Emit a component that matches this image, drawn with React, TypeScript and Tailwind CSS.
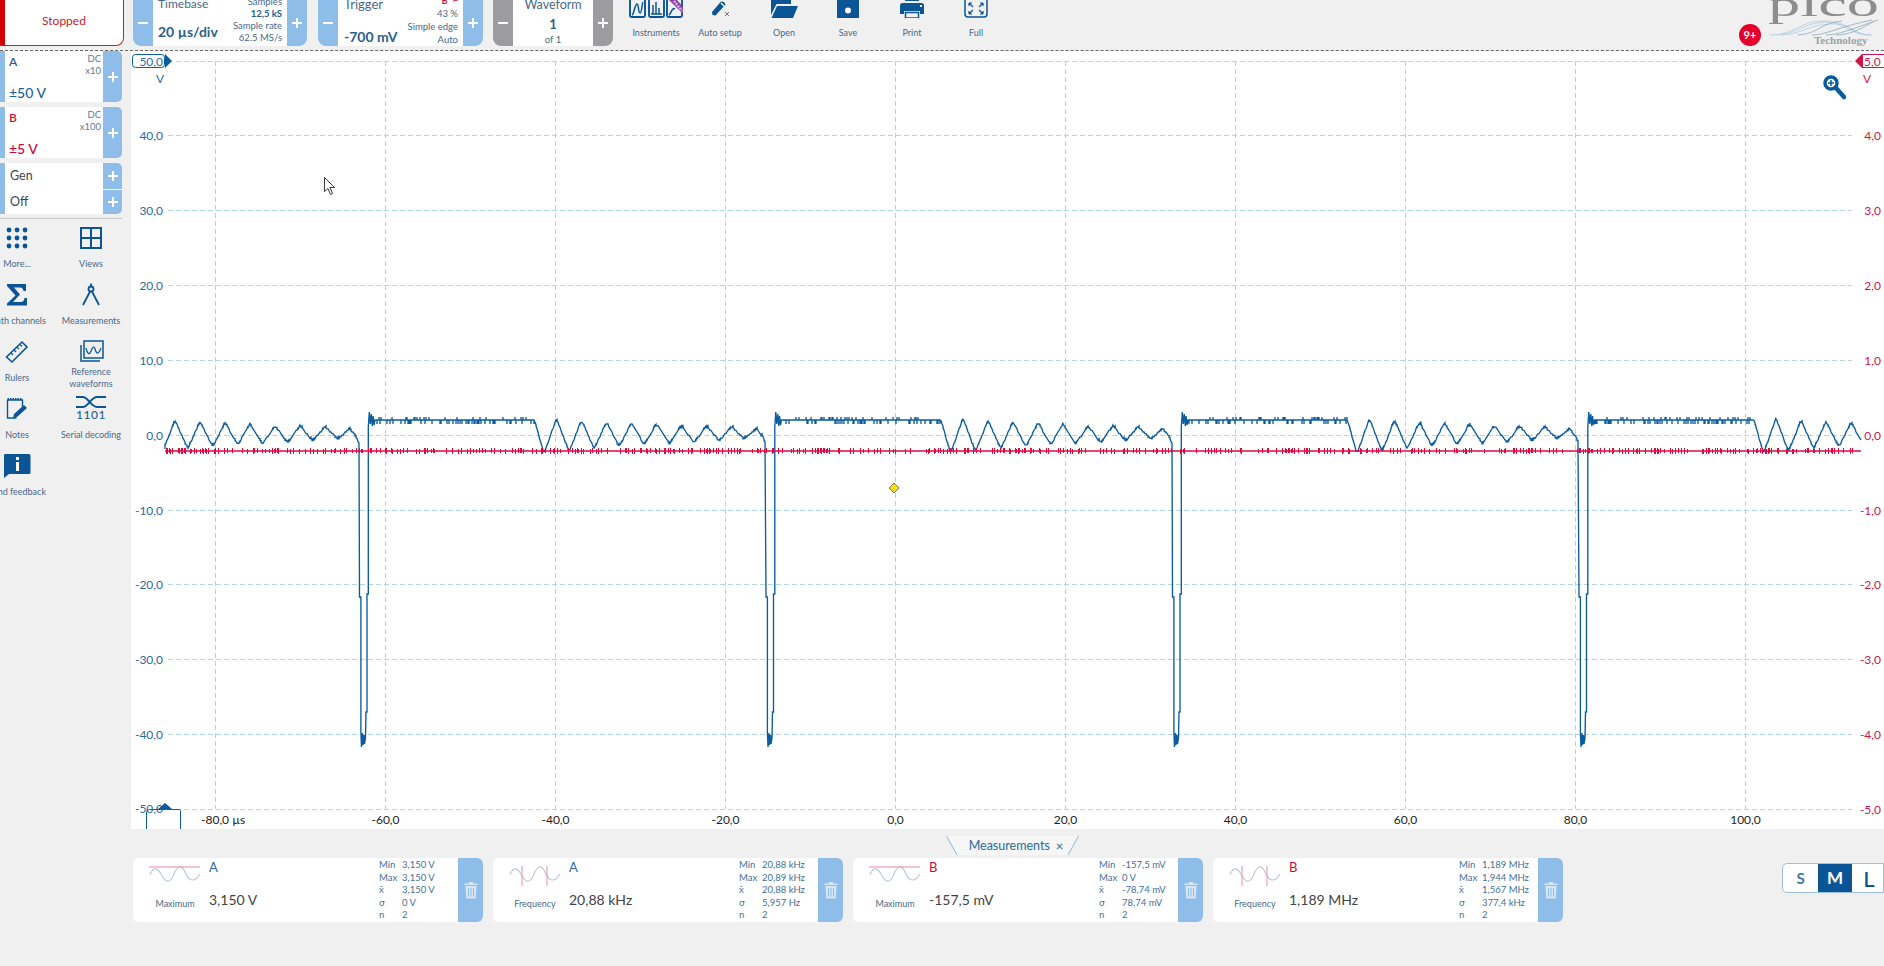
import React from 'react';

// seeded noise so the traces look the same on every render
const makeRandom = (seed: number) => () => {
  seed = (seed * 1664525 + 1013904223) % 4294967296;
  return seed / 4294967296;
};

const RING: [number, number][] = [
  [175, 420], [184.5, 454], [197, 418], [209.5, 452], [222, 420], [234.7, 449], [247, 421.5],
  [259.7, 447], [272, 422.5], [284.7, 445], [297, 423.5], [309.7, 444], [322, 425.5], [334.7, 443],
  [347, 425.5], [359.7, 441], [372, 426.5], [384.7, 439], [397, 428.5], [404, 438], [406.5, 445],
];

const PULSE: [number, number][] = [
  [0, 597], [1.4, 597], [1.4, 733], [2, 747], [3, 733], [3.5, 745], [4.5, 735], [5, 744], [6, 738],
  [6.5, 712], [7.5, 712], [7.5, 594], [8.8, 594], [8.8, 427], [9.8, 412], [10.8, 424], [11.8, 414],
  [12.8, 426], [13.6, 416], [14.5, 425], [15.5, 420],
];

const PERIOD = 406.5;
const FIRST_FALL = 359.5;

const ringAt = (t: number) => {
  if (t <= RING[0][0]) return RING[0][1];
  for (let i = 0; i < RING.length - 1; i++) {
    const [t0, y0] = RING[i];
    const [t1, y1] = RING[i + 1];
    if (t >= t0 && t <= t1) return y0 + ((y1 - y0) * (t - t0)) / (t1 - t0);
  }
  return RING[RING.length - 1][1];
};

const blueTrace = () => {
  const rnd = makeRandom(11);
  let d = 'M165 449';
  for (let x = 165; x <= 1861; x++) {
    const t = (((x - FIRST_FALL) % PERIOD) + PERIOD) % PERIOD;
    if (t < 1) {
      PULSE.forEach(([dx, y]) => {
        d += `L${(x - t + dx).toFixed(1)} ${y}`;
      });
      continue;
    }
    if (t < 16) continue;
    let y = 420;
    if (t < 175) {
      const r = rnd();
      if (r < 0.45) {
        const tip = r < 0.3 ? 424 : 417;
        d += `L${x} 420L${x} ${tip}L${x} 420`;
        continue;
      }
    } else {
      // slightly averaged so the peaks lose their point, then stepped like an 8 bit capture
      y = (ringAt(t - 1) + ringAt(t) + ringAt(t + 1)) / 3;
      y = Math.round(y / 1.6) * 1.6;
      const isTurn = RING.some(([rt]) => Math.abs(rt - t) < 3);
      if (isTurn && rnd() < 0.45) {
        d += `L${x} ${y - 1.2}L${x} ${y + 1.2}`;
      }
    }
    d += `L${x} ${y}`;
  }
  return d;
};

const redTicks = () => {
  const rnd = makeRandom(97);
  let d = '';
  for (let x = 166; x < 1861; x += 1.5) {
    if (rnd() < 0.42) {
      const up = rnd() < 0.7 ? 448 : 449;
      const down = rnd() < 0.5 ? 454 : 453;
      d += `M${Math.floor(x) + 0.5} ${up}V${down}`;
    }
  }
  return d;
};

const BLUE_PATH = blueTrace();
const RED_TICKS = redTicks();

const yLines = [50, 40, 30, 20, 10, 0, -10, -20, -30, -40, -50].map((v, i) => ({
  left: v.toFixed(1).replace('.', ','),
  right: (v / 10).toFixed(1).replace('.', ','),
  y: Math.round(60.5 + i * 74.85) + 0.5,
}));

const xLines = [-80, -60, -40, -20, 0, 20, 40, 60, 80, 100].map((v, i) => ({
  label: v.toFixed(1).replace('.', ','),
  x: Math.round(214.5 + i * 170) + 0.5,
}));

const Plot = () => (
  <svg viewBox="131 51 1753 778" className="block w-[1753px] h-[778px] bg-white shrink-0">
    <g stroke="#b4d4de" strokeWidth="1" strokeDasharray="5 3" fill="none">
      {yLines.map((l) => (
        <path key={l.y} d={`M168 ${l.y}H1852`} />
      ))}
      {xLines.map((l) => (
        <path key={l.x} d={`M${l.x} 61V809`} />
      ))}
    </g>

    {yLines.slice(1, 10).map((l) => (
      <text key={l.left} x="163" y={l.y + 4} textAnchor="end" className="text-[12px] fill-[#2a6a9e]">
        {l.left}
      </text>
    ))}
    {yLines.slice(1).map((l) => (
      <text key={l.right} x="1881" y={l.y + 4} textAnchor="end" className="text-[12px] fill-[#d0144a]">
        {l.right}
      </text>
    ))}
    {xLines.map((l, i) =>
      i === 0 ? (
        <text key={l.x} x="201" y="824" className="text-[12px] fill-[#222]">
          {l.label} µs
        </text>
      ) : (
        <text key={l.x} x={l.x} y="824" textAnchor="middle" className="text-[12px] fill-[#222]">
          {l.label}
        </text>
      ),
    )}

    {/* axis handles */}
    <rect x="132.5" y="54.5" width="32" height="13" rx="3" fill="#fff" stroke="#0b5c9e" />
    <path d="M165 54l7 7-7 7z" fill="#0b5c9e" />
    <text x="163" y="65.500" textAnchor="end" className="text-[12px] fill-[#2a6a9e]">50,0</text>
    <text x="160" y="83" textAnchor="middle" className="text-[12px] fill-[#2a6a9e]">V</text>

    <rect x="1862.5" y="54.5" width="24" height="13" fill="#fff" stroke="#d0144a" />
    <path d="M1862 54l-7 7 7 7z" fill="#d0144a" />
    <text x="1864" y="65.500" className="text-[12px] fill-[#d0144a]">5,0</text>
    <text x="1867" y="83" textAnchor="middle" className="text-[12px] fill-[#d0144a]">V</text>

    <text x="163" y="813" textAnchor="end" className="text-[12px] fill-[#2a6a9e]">-50,0</text>
    <path d="M146.5 829V813q0-3.500 3-3.500h30q1 0 1 1V829" fill="none" stroke="#0b5c9e" />
    <path d="M158 809l7-6 7 6z" fill="#0b5c9e" />

    {/* traces */}
    <path d={BLUE_PATH} fill="none" stroke="#0b5c9e" strokeWidth="1.35" />
    <path d="M165 451H1861" fill="none" stroke="#dc0a3e" strokeWidth="1.6" />
    <path d={RED_TICKS} fill="none" stroke="#dc0a3e" strokeWidth="1" shapeRendering="crispEdges" />

    {/* trigger marker */}
    <path d="M894 483l5 5-5 5-5-5z" fill="#f4e01c" stroke="#555" strokeWidth="0.8" />

    {/* zoom glass */}
    <circle cx="1831" cy="83" r="6" fill="#fff" stroke="#0b5c9e" strokeWidth="3.500" />
    <path d="M1836 88l8 9" stroke="#0b5c9e" strokeWidth="4.500" strokeLinecap="round" />
    <path d="M1828 83h6M1831 80v6" stroke="#0b5c9e" strokeWidth="1.500" />

    {/* mouse pointer */}
    <path d="M324.500 177.500v14l3.500-3 2.500 6 2-1-2.500-6h4.500z" fill="#fff" stroke="#222" strokeWidth="0.9" />
  </svg>
);

const Plus = () => (
  <svg viewBox="0 0 12 12" className="w-[12px] h-[12px]">
    <path d="M6 1v10M1 6h10" stroke="#fff" strokeWidth="2" />
  </svg>
);

const Minus = () => (
  <svg viewBox="0 0 12 12" className="w-[12px] h-[12px]">
    <path d="M1 6h10" stroke="#fff" strokeWidth="2" />
  </svg>
);

const StepGroup = ({
  children,
  className,
  gray,
}: {
  children: React.ReactNode;
  className: string;
  gray?: boolean;
}) => {
  const btn = gray ? 'bg-[#9b9ba0]' : 'bg-[#8fbde9]';
  return (
    <div className={`flex h-[46px] overflow-hidden rounded-b-[8px] bg-white shrink-0 ${className}`}>
      <div className={`w-[20px] shrink-0 flex items-center justify-center ${btn}`}>
        <Minus />
      </div>
      <div className="flex-1 min-w-0 overflow-hidden">{children}</div>
      <div className={`w-[20px] shrink-0 flex items-center justify-center ${btn}`}>
        <Plus />
      </div>
    </div>
  );
};

const ToolButton = ({ icon, label }: { icon: React.ReactNode; label: string }) => (
  <div className="w-[64px] shrink-0 flex flex-col items-center">
    <div className="h-[18px] overflow-hidden flex items-end justify-center">{icon}</div>
    <div className="mt-[8px] text-[9px] leading-[14px] text-[#48698a] whitespace-nowrap">{label}</div>
  </div>
);

const DARK = '#0b5596';

const InstrumentsIcon = () => (
  <svg width="54" height="18" viewBox="0 0 54 18">
    <g fill="none" stroke={DARK} strokeWidth="1.900">
      <rect x="1" y="-6" width="15" height="23" rx="1.500" />
      <path d="M3 15c2-1 3-11 5-11s1 9 3 9 2-10 3-11" strokeWidth="1.500" />
      <rect x="20" y="-6" width="15" height="23" rx="1.500" />
      <path d="M22 14h11M24 14V5M27 14V2M30 14V8" strokeWidth="1.500" />
      <rect x="38" y="-6" width="15" height="23" rx="1.500" />
      <path d="M40 15c2-1 3-8 6-6" strokeWidth="1.500" />
    </g>
    <path d="M40 0h8l6 7v7z" fill="#8a3fa8" />
    <path d="M45 1l8 10" stroke="#d9b7e6" strokeWidth="2.500" strokeDasharray="2 1" />
  </svg>
);

const AutoSetupIcon = () => (
  <svg width="20" height="18" viewBox="0 0 20 18">
    <path d="M2 12L11 1.500l3 .5 1.500 2.500L5.500 15.500 2.500 15z" fill={DARK} />
    <path d="M11 3l3 3" stroke="#fff" strokeWidth="1.200" />
    <path d="M15 12l4 4M19 12l-4 4" stroke="#777" strokeWidth="1" />
  </svg>
);

const OpenIcon = () => (
  <svg width="28" height="18" viewBox="0 0 28 18">
    <path d="M1 -4h8l2 2h10v6H6.500L1 15z" fill={DARK} />
    <path d="M1.500 18L7 6h21l-5 12z" fill={DARK} />
  </svg>
);

const SaveIcon = () => (
  <svg width="22" height="18" viewBox="0 0 22 18">
    <path d="M0 -4h22v22H0z" fill={DARK} />
    <circle cx="11" cy="10.500" r="3" fill="#fff" />
  </svg>
);

const PrintIcon = () => (
  <svg width="24" height="18" viewBox="0 0 24 18">
    <rect x="5" y="-4" width="14" height="5" fill={DARK} />
    <path d="M2.500 3h19q2.500 0 2.500 2.500V14h-4v-3H4v3H0V5.500Q0 3 2.500 3z" fill={DARK} />
    <rect x="20" y="5" width="2" height="2" fill="#fff" />
    <path d="M5.500 12.500h13V18h-13z" fill="none" stroke={DARK} strokeWidth="1.500" />
  </svg>
);

const FullIcon = () => (
  <svg width="24" height="18" viewBox="0 0 24 18">
    <rect x="1" y="-6" width="22" height="23" rx="3" fill="none" stroke={DARK} strokeWidth="1.500" />
    <path
      d="M5 3l3 0M5 3v3M5 3l4 4M19 3h-3M19 3v3M19 3l-4 4M5 14h3M5 14v-3M5 14l4-4M19 14h-3M19 14v-3M19 14l-4-4"
      fill="none"
      stroke={DARK}
      strokeWidth="1.200"
    />
  </svg>
);

const Logo = () => (
  <svg width="116" height="46" viewBox="0 0 116 46" className="shrink-0">
    <text
      x="0"
      y="16"
      textLength="111"
      lengthAdjust="spacingAndGlyphs"
      className="text-[36px] fill-[#8d8d8d] font-['Liberation_Serif',serif]"
    >
      pico
    </text>
    <g fill="none" stroke="#a9c8de" strokeWidth="0.700">
      <path d="M2 35c25 0 30-14 52-14s25 14 50 14" />
      <path d="M8 35c22-1 26-12 50-13s25 13 45 13" />
      <path d="M14 35c20-1 26-10 48-11s24 11 38 11" />
      <path d="M30 35c20-1 22-12 44-14M44 35c14 0 26-8 60-15M58 35c12 0 26-6 52-15M68 35c12 0 24-5 38-14" stroke="#7f9fb8" />
    </g>
    <text x="46" y="44" className="text-[11px] font-bold fill-[#9aa3a8] font-['Liberation_Serif',serif]">
      Technology
    </text>
  </svg>
);

const ChannelCard = ({
  name,
  probe,
  range,
  color,
}: {
  name: string;
  probe: string;
  range: string;
  color: string;
}) => (
  <div className="flex h-[51px] w-[122px]">
    <div className="w-[5px] bg-[#8fbde9]" />
    <div className="flex-1 bg-white relative pl-[4px] pr-[2px] flex flex-col justify-between">
      <div className="flex justify-between">
        <span className={`text-[12px] font-semibold leading-[18px] mt-[2px] ${color}`}>{name}</span>
        <span className="text-[9.5px] leading-[12px] text-right text-[#5a7a96] mt-[2px]">
          DC
          <br />
          {probe}
        </span>
      </div>
      <span className={`text-[14px] font-medium leading-[18px] ${color}`}>{range}</span>
    </div>
    <div className="w-[19px] bg-[#8fbde9] rounded-r-[5px] flex items-center justify-center">
      <Plus />
    </div>
  </div>
);

const GenRow = ({ label, last }: { label: string; last?: boolean }) => (
  <div className="flex h-[25.5px] w-[122px]">
    <div className="w-[5px] bg-[#8fbde9]" />
    <div className="flex-1 bg-white pl-[5px] pt-[2px] text-[12.5px] text-[#444] flex items-center">{label}</div>
    <div
      className={`w-[19px] bg-[#8fbde9] flex items-center justify-center ${
        last ? 'rounded-br-[5px] border-t border-white' : 'rounded-tr-[5px]'
      }`}
    >
      <Plus />
    </div>
  </div>
);

const sideItems: { label: React.ReactNode; icon: React.ReactNode }[] = [
  {
    label: 'More...',
    icon: (
      <svg width="24" height="24" viewBox="0 0 24 24" fill={DARK}>
        {[4, 12, 20].map((y) =>
          [4, 12, 20].map((x) => <circle key={`${x}-${y}`} cx={x} cy={y} r="2.400" />),
        )}
      </svg>
    ),
  },
  {
    label: 'Views',
    icon: (
      <svg width="24" height="24" viewBox="0 0 24 24" fill="none" stroke={DARK} strokeWidth="2">
        <rect x="2" y="2" width="20" height="20" />
        <path d="M12 2v20M2 12h20" />
      </svg>
    ),
  },
  {
    label: 'Math channels',
    icon: (
      <svg width="22" height="24" viewBox="0 0 22 24" fill={DARK}>
        <path d="M1 1h19v7h-2.500c-.5-2.500-1.500-3.500-4-3.500H8l6 7-7 7.500h7c3 0 4-1 4.500-4H21v7.500H1v-2l8.500-8L1 3z" />
      </svg>
    ),
  },
  {
    label: 'Measurements',
    icon: (
      <svg width="22" height="24" viewBox="0 0 22 24" fill="none" stroke={DARK} strokeWidth="1.800">
        <circle cx="11" cy="6" r="2.500" />
        <path d="M10 8.500L3 22M12 8.500L19 22M11 0.500v3" />
      </svg>
    ),
  },
  {
    label: 'Rulers',
    icon: (
      <svg width="24" height="24" viewBox="0 0 24 24" fill="none" stroke={DARK} strokeWidth="1.600">
        <path d="M1.500 17L17 2l5 5L7 22z" />
        <path d="M6 13l2 2M9 10l2 2M12 7l2 2M15 4.500l2 2" strokeWidth="1.200" />
      </svg>
    ),
  },
  {
    label: (
      <>
        Reference
        <br />
        waveforms
      </>
    ),
    icon: (
      <svg width="26" height="24" viewBox="0 0 26 24" fill="none" stroke={DARK} strokeWidth="1.500">
        <rect x="6" y="1" width="19" height="17" />
        <path d="M3 5v16h19M1 3" />
        <path d="M8 8c2 8 4 6 5 3s3-6 4-2 3 7 6-1" strokeWidth="1.200" />
      </svg>
    ),
  },
  {
    label: 'Notes',
    icon: (
      <svg width="24" height="24" viewBox="0 0 24 24" fill="none" stroke={DARK} strokeWidth="1.400">
        <path d="M2.500 3h15v8M2.500 3v18h9" />
        <path d="M2.500 2h15" strokeDasharray="1.500 1" strokeWidth="2" />
        <path d="M8 21l1-4L19 8l3 3-10 9z" fill={DARK} stroke="none" />
      </svg>
    ),
  },
  {
    label: 'Serial decoding',
    icon: (
      <div className="w-[30px] h-[26px] flex flex-col items-center">
        <svg width="30" height="12" viewBox="0 0 30 12" fill="none" stroke={DARK} strokeWidth="2" className="shrink-0">
          <path d="M0 1h7c5 0 8 10 14 10h9M0 11h7c5 0 8-10 14-10h9" />
        </svg>
        <span className="text-[12px] leading-[13px] text-[#1f5f95] font-medium tracking-[0.5px]">1101</span>
      </div>
    ),
  },
  {
    label: 'Send feedback',
    icon: (
      <svg width="28" height="24" viewBox="0 0 28 24" fill={DARK}>
        <path d="M2 0h24q1.500 0 1.500 1.500v17q0 1.500-1.500 1.500H6l-5 4V1.500Q1 0 2 0z" />
        <path d="M13 3h3v3h-3zM13 8h3v9h-3z" fill="#fff" />
      </svg>
    ),
  },
];

const SidePanel = () => (
  <div className="w-[131px] shrink-0 overflow-hidden h-full">
    <div className="flex flex-col gap-[5px]">
      <ChannelCard name="A" probe="x10" range="±50 V" color="text-[#1f5f95]" />
      <ChannelCard name="B" probe="x100" range="±5 V" color="text-[#d0063c]" />
      <div className="flex flex-col">
        <GenRow label="Gen" />
        <GenRow label="Off" last />
      </div>
    </div>
    <div className="h-px w-[122px] bg-[#c8c8c8] mt-[4px]" />
    <div className="grid grid-cols-[74px_74px] -ml-[20px] w-[148px] mt-[6px]">
      {sideItems.map((item, i) => (
        <div key={i} className="h-[57px] flex flex-col items-center">
          <div className="h-[26px] flex items-center justify-center">{item.icon}</div>
          <div className="h-[25px] flex items-center text-center text-[9px] leading-[12px] text-[#48698a] whitespace-nowrap">
            {item.label}
          </div>
        </div>
      ))}
    </div>
  </div>
);

const TrashIcon = () => (
  <svg width="14" height="18" viewBox="0 0 14 18">
    <path d="M0.500 2.500h13v1.500H.5zM5 2.500V1h4v1.500z" fill="#d6e6f6" />
    <path d="M1.500 5h11l-.8 12.500H2.300z" fill="#d6e6f6" />
    <path d="M4.500 7v8.500M7 7v8.500M9.500 7v8.500" stroke="#8fbde9" strokeWidth="1" />
  </svg>
);

const MiniWave = ({ kind }: { kind: 'max' | 'freq' }) => (
  <svg width="52" height="20" viewBox="0 0 52 20" className="shrink-0 block">
    <path
      d="M1 9C4 1 8 1 12 8s8 12 13 0 9-7 12 0 9 9 14 0"
      fill="none"
      stroke="#b6c8dc"
      strokeWidth="1.100"
    />
    {kind === 'max' ? (
      <path d="M0 1h51" stroke="#f08aa0" strokeWidth="1.200" />
    ) : (
      <path d="M13 0v20M38 0v20" stroke="#ef8aa0" strokeWidth="1" />
    )}
  </svg>
);

const measurements = [
  {
    channel: 'A',
    kind: 'max' as const,
    name: 'Maximum',
    value: '3,150 V',
    stats: ['3,150 V', '3,150 V', '3,150 V', '0 V', '2'],
  },
  {
    channel: 'A',
    kind: 'freq' as const,
    name: 'Frequency',
    value: '20,88 kHz',
    stats: ['20,88 kHz', '20,89 kHz', '20,88 kHz', '5,957 Hz', '2'],
  },
  {
    channel: 'B',
    kind: 'max' as const,
    name: 'Maximum',
    value: '-157,5 mV',
    stats: ['-157,5 mV', '0 V', '-78,74 mV', '78,74 mV', '2'],
  },
  {
    channel: 'B',
    kind: 'freq' as const,
    name: 'Frequency',
    value: '1,189 MHz',
    stats: ['1,189 MHz', '1,944 MHz', '1,567 MHz', '377,4 kHz', '2'],
  },
];

const statNames = ['Min', 'Max', 'x̄', 'σ', 'n'];

const MeasurementCard = ({ m }: { m: (typeof measurements)[number] }) => (
  <div className="w-[350px] h-[64px] bg-white rounded-[6px] flex overflow-hidden shrink-0">
    <div className="w-[74px] shrink-0 flex flex-col items-center pt-[8px] pl-[10px]">
      <MiniWave kind={m.kind} />
      <span className="mt-[11px] text-[9px] leading-[14px] text-[#48698a]">{m.name}</span>
    </div>
    <div className="flex-1 min-w-0 pl-[2px]">
      <div
        className={`text-[13px] leading-[14px] mt-[2px] ${
          m.channel === 'A' ? 'text-[#2a6a9e]' : 'text-[#d0063c]'
        }`}
      >
        {m.channel}
      </div>
      <div className="text-[14px] leading-[20px] text-[#444] mt-[16px]">{m.value}</div>
    </div>
    <div className="w-[79px] shrink-0 grid grid-cols-[23px_1fr] grid-rows-5 h-[64px] pb-[1px] text-[9.5px] leading-[13px] text-[#44709a] whitespace-nowrap">
      {m.stats.map((s, i) => (
        <React.Fragment key={i}>
          <span>{statNames[i]}</span>
          <span>{s}</span>
        </React.Fragment>
      ))}
    </div>
    <div className="w-[25px] shrink-0 bg-[#8fbde9] flex items-center justify-center">
      <TrashIcon />
    </div>
  </div>
);

const MeasurementsTab = () => (
  <div className="relative w-[133px] h-[19px] ml-[815px] mt-[7px] flex items-center justify-center pl-[7px]">
    <svg width="133" height="19" viewBox="0 0 133 19" className="absolute inset-0">
      <path d="M0.500 0L11 19h111L132.500 0z" fill="#f6f6f6" />
      <path d="M0.500 0L11 19M132.500 0L122 19" stroke="#8fb6d8" fill="none" />
    </svg>
    <span className="relative text-[12.5px] leading-[16px] text-[#2a6a9e]">Measurements</span>
    <span className="relative ml-[6px] text-[13px] leading-[16px] text-[#2a6a9e]">×</span>
  </div>
);

const SizeSwitch = () => (
  <div className="ml-auto mt-[5px] flex h-[30px] w-[102px] shrink-0 rounded-l-[5px] border border-[#9dbfdd] bg-white overflow-hidden">
    <div className="w-[35px] shrink-0 flex items-center justify-center text-[15px] font-bold text-[#3e78aa]">S</div>
    <div className="w-[34px] shrink-0 flex items-center justify-center text-[17px] font-bold text-white bg-[#0b5596]">M</div>
    <div className="w-[34px] shrink-0 flex items-center justify-center text-[22px] font-medium text-[#0b5596]">L</div>
  </div>
);

export default function App() {
  return (
    <div className="w-[1884px] h-[966px] overflow-hidden bg-[#f0f0f0] flex flex-col font-['Lato',sans-serif]">
      <div className="h-[51px] shrink-0 flex items-start overflow-hidden border-b border-dashed border-[#666]">
        <div className="w-[124px] h-[46px] shrink-0 flex bg-white rounded-br-[8px] border-r border-b border-[#c8202a] overflow-hidden">
          <div className="w-[5px] bg-[#d40000]" />
          <div className="flex-1 pb-[4px] flex items-center justify-center text-[12px] text-[#c8202a]">Stopped</div>
        </div>

        <StepGroup className="w-[174px] ml-[9px]">
          <div className="flex justify-between pl-[5px] pr-[5px]">
            <div className="-mt-[5px]">
              <div className="text-[12px] leading-[18px] text-[#48698a]">Timebase</div>
              <div className="text-[14px] leading-[20px] font-bold text-[#2a5f8f] mt-[9px]">20 µs/div</div>
            </div>
            <div className="-mt-[4px] text-right text-[9.5px] leading-[12px] text-[#48698a] whitespace-nowrap">
              <div>Samples</div>
              <div className="font-bold text-[#1f5f95]">12,5 kS</div>
              <div>Sample rate</div>
              <div>62.5 MS/s</div>
            </div>
          </div>
        </StepGroup>

        <StepGroup className="w-[165px] ml-[11px]">
          <div className="flex justify-between pl-[6px] pr-[5px]">
            <div className="-mt-[5px]">
              <div className="text-[13px] leading-[18px] text-[#48698a]">Trigger</div>
              <div className="text-[14px] leading-[20px] font-bold text-[#2a5f8f] mt-[14px]">-700 mV</div>
            </div>
            <div className="-mt-[6px] text-right text-[9.5px] leading-[13px] text-[#48698a] whitespace-nowrap">
              <div className="text-[#d0063c] font-semibold">B &nbsp;⌐</div>
              <div>43 %</div>
              <div>Simple edge</div>
              <div>Auto</div>
            </div>
          </div>
        </StepGroup>

        <StepGroup className="w-[120px] ml-[10px]" gray>
          <div className="-mt-[4px] flex flex-col items-center text-[#48698a]">
            <div className="text-[12.5px] leading-[18px]">Waveform</div>
            <div className="text-[13px] leading-[16px] font-bold text-[#1f5f95] mt-[2px]">1</div>
            <div className="text-[9.5px] leading-[14px] mt-[1px]">of 1</div>
          </div>
        </StepGroup>

        <div className="flex ml-[11px]">
          <ToolButton icon={<InstrumentsIcon />} label="Instruments" />
          <ToolButton icon={<AutoSetupIcon />} label="Auto setup" />
          <ToolButton icon={<OpenIcon />} label="Open" />
          <ToolButton icon={<SaveIcon />} label="Save" />
          <ToolButton icon={<PrintIcon />} label="Print" />
          <ToolButton icon={<FullIcon />} label="Full" />
        </div>

        <div className="ml-auto mt-[24px] w-[22px] h-[22px] rounded-full bg-[#e4002b] flex items-center justify-center text-[11px] font-bold text-white shrink-0">
          9+
        </div>
        <div className="ml-[7px]">
          <Logo />
        </div>
      </div>

      <div className="flex flex-1 min-h-0">
        <SidePanel />
        <div className="flex-1 min-w-0 flex flex-col">
          <Plot />
          <MeasurementsTab />
          <div className="flex items-start ml-[2px] mt-[3px]">
            <div className="flex gap-[10px]">
              {measurements.map((m, i) => (
                <MeasurementCard key={i} m={m} />
              ))}
            </div>
            <SizeSwitch />
          </div>
        </div>
      </div>
    </div>
  );
}
